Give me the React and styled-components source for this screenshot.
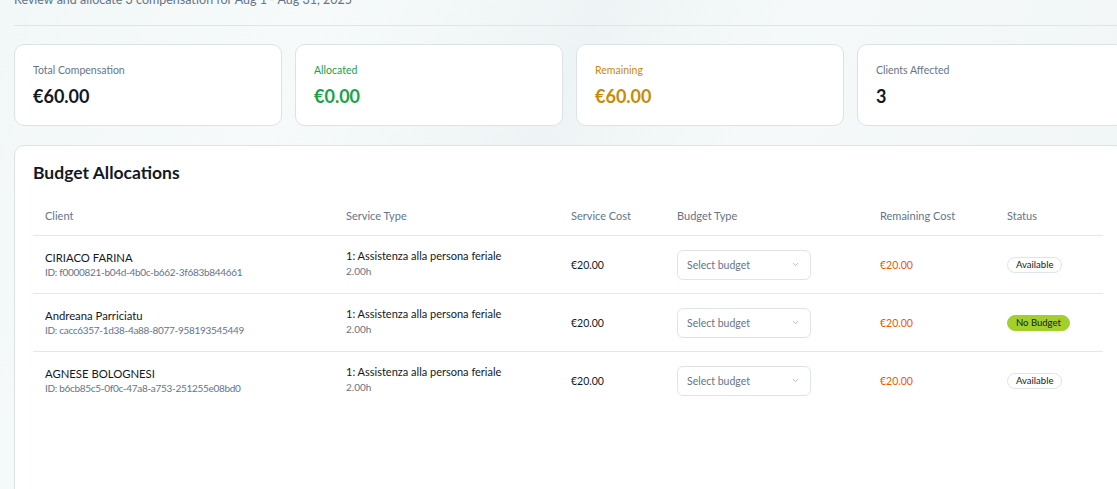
import React from "react";
import styled, { createGlobalStyle } from "styled-components";

const Global = createGlobalStyle`
  html, body { margin: 0; padding: 0; }
  body {
    width: 1117px;
    height: 489px;
    overflow: hidden;
    font-family: "Lato", "Open Sans", sans-serif;
    background: linear-gradient(115deg, #f2f7f8 0%, #f6fafa 25%, #eef4f5 45%, #f5f9f9 60%, #f0f5f6 100%);
    color: #0f172a;
  }
`;

const Page = styled.div`
  width: 1111px;
  margin: -10px 0 0 14px;
`;

const Header = styled.div`
  padding-bottom: 16px;
  border-bottom: 1px solid #dde5ea;
`;

const Subtitle = styled.p`
  margin: 0;
  font-size: 12.5px;
  line-height: 19px;
  color: #64748b;
`;

const Stats = styled.div`
  display: grid;
  grid-template-columns: repeat(4, 1fr);
  gap: 13px;
  margin-top: 18px;
`;

const StatCard = styled.div`
  background: #fff;
  border: 1px solid #dbe3ea;
  border-radius: 10px;
  height: 82px;
  box-sizing: border-box;
  padding: 17px 18px;
  display: flex;
  flex-direction: column;
  gap: 6px;
`;

const StatLabel = styled.div`
  font-size: 10.5px;
  line-height: 16px;
  color: ${(p) => p.$color || "#64748b"};
`;

const StatValue = styled.div`
  font-size: 18px;
  line-height: 24px;
  font-weight: 700;
  color: ${(p) => p.$color || "#111827"};
`;

const Panel = styled.div`
  margin-top: 19px;
  background: #fff;
  border: 1px solid #dbe3ea;
  border-radius: 10px;
  padding: 14px 18px 80px;
  min-height: 400px;
`;

const PanelTitle = styled.h2`
  margin: 0 0 10px;
  font-size: 17.5px;
  line-height: 26px;
  font-weight: 700;
  color: #111827;
`;

const Table = styled.table`
  width: 1070px;
  border-collapse: collapse;
  table-layout: fixed;
`;

const Th = styled.th`
  text-align: left;
  font-weight: 400;
  font-size: 11px;
  color: #64748b;
  height: 39px;
  padding: 0 12px;
  border-bottom: 1px solid #e2e8f0;
`;

const Tr = styled.tr`
  height: 58px;
  border-bottom: 1px solid #e2e8f0;
  &:last-child { border-bottom: none; }
`;

const Td = styled.td`
  padding: 0 12px ${(p) => p.$lift || 0}px;
  font-size: 10.5px;
  color: ${(p) => p.$color || "#111827"};
  vertical-align: middle;
`;

const Primary = styled.div`
  font-size: ${(p) => p.$size || 11}px;
  line-height: 15px;
  color: #111827;
`;

const Secondary = styled.div`
  font-size: 10px;
  letter-spacing: ${(p) => (p.$tight ? "-0.3px" : "0")};
  line-height: 15px;
  color: #64748b;
  margin-top: ${(p) => p.$gap || 0}px;
`;

const Select = styled.div`
  width: 134px;
  height: 30px;
  box-sizing: border-box;
  border: 1px solid #dde5ea;
  border-radius: 6px;
  display: flex;
  align-items: center;
  justify-content: space-between;
  padding: 0 10px 0 9px;
  font-size: 10.5px;
  color: #64748b;
`;

const Badge = styled.span`
  display: inline-block;
  font-size: 9.5px;
  line-height: 14px;
  padding: 0 8px;
  border-radius: 999px;
  color: #111827;
  border: 1px solid ${(p) => (p.$filled ? "#a3cf2c" : "#dde5ea")};
  background: ${(p) => (p.$filled ? "#a3cf2c" : "#fff")};
`;

const Chevron = () => (
  <svg width="9" height="9" viewBox="0 0 24 24" fill="none" stroke="#9aa5b4" strokeWidth="2" strokeLinecap="round" strokeLinejoin="round">
    <path d="m6 9 6 6 6-6" />
  </svg>
);

const rows = [
  { name: "CIRIACO FARINA", id: "f0000821-b04d-4b0c-b662-3f683b844661", status: "Available" },
  { name: "Andreana Parriciatu", id: "cacc6357-1d38-4a88-8077-958193545449", status: "No Budget" },
  { name: "AGNESE BOLOGNESI", id: "b6cb85c5-0f0c-47a8-a753-251255e08bd0", status: "Available" },
];

export default function App() {
  return (
    <>
      <Global />
      <Page>
        <Header>
          <Subtitle>Review and allocate  3 compensation for Aug 1 - Aug 31, 2025</Subtitle>
        </Header>
        <Stats>
          <StatCard>
            <StatLabel>Total Compensation</StatLabel>
            <StatValue>€60.00</StatValue>
          </StatCard>
          <StatCard>
            <StatLabel $color="#16a34a">Allocated</StatLabel>
            <StatValue $color="#16a34a">€0.00</StatValue>
          </StatCard>
          <StatCard>
            <StatLabel $color="#ca8a04">Remaining</StatLabel>
            <StatValue $color="#ca8a04">€60.00</StatValue>
          </StatCard>
          <StatCard>
            <StatLabel>Clients Affected</StatLabel>
            <StatValue>3</StatValue>
          </StatCard>
        </Stats>
        <Panel>
          <PanelTitle>Budget Allocations</PanelTitle>
          <Table>
            <colgroup>
              <col style={{ width: 301 }} />
              <col style={{ width: 225 }} />
              <col style={{ width: 106 }} />
              <col style={{ width: 203 }} />
              <col style={{ width: 127 }} />
              <col style={{ width: 108 }} />
            </colgroup>
            <thead>
              <tr>
                <Th>Client</Th>
                <Th>Service Type</Th>
                <Th>Service Cost</Th>
                <Th>Budget Type</Th>
                <Th>Remaining Cost</Th>
                <Th>Status</Th>
              </tr>
            </thead>
            <tbody>
              {rows.map((r) => (
                <Tr key={r.id}>
                  <Td>
                    <Primary $size={11.3}>{r.name}</Primary>
                    <Secondary $tight>ID: {r.id}</Secondary>
                  </Td>
                  <Td $lift={3}>
                    <Primary>1: Assistenza alla persona feriale</Primary>
                    <Secondary $gap={1}>2.00h</Secondary>
                  </Td>
                  <Td>€20.00</Td>
                  <Td>
                    <Select>
                      <span>Select budget</span>
                      <Chevron />
                    </Select>
                  </Td>
                  <Td $color="#ea580c">€20.00</Td>
                  <Td>
                    <Badge $filled={r.status === "No Budget"}>{r.status}</Badge>
                  </Td>
                </Tr>
              ))}
            </tbody>
          </Table>
        </Panel>
      </Page>
    </>
  );
}
